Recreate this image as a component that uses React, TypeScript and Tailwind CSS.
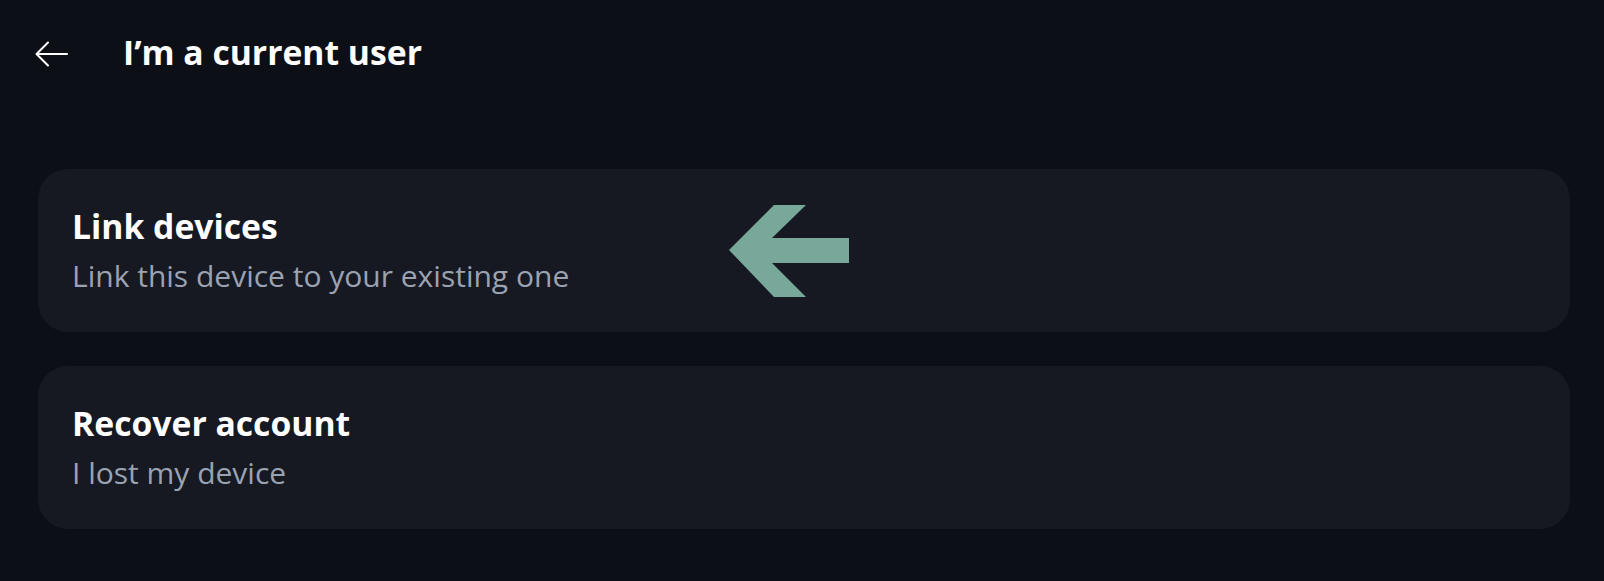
export default function App() {
  return (
    <div
      className="min-h-[581px] w-full bg-[#0c0f16] text-white"
      style={{ fontFamily: '"Open Sans", "Noto Sans", sans-serif' }}
    >
      {/* Header */}
      <div className="flex items-center pt-[32px] pl-[35px]">
        <svg width="34" height="26" viewBox="0 0 34 26" fill="none" className="shrink-0 mt-[3px]">
          <path d="M32 13H2M13 1.5L1.5 13L13 24.5" stroke="#fff" strokeWidth="2" strokeLinecap="round" strokeLinejoin="round" />
        </svg>
        <h1 className="ml-[54px] text-[33.7px] leading-[40px] font-bold">I’m a current user</h1>
      </div>

      {/* Options */}
      <div className="mt-[97px] ml-[38px] mr-[34px] flex flex-col gap-[34px]">
        <button className="relative flex h-[163px] flex-col items-start rounded-[30px] bg-[#161922] pl-[34px] pt-[37px] text-left">
          <span className="text-[33.7px] leading-[40px] font-bold">Link devices</span>
          <span className="mt-[12px] text-[30px] leading-[36px] text-[#9ba2b2]">Link this device to your existing one</span>
          <svg width="122" height="94" viewBox="0 0 122 94" className="absolute left-[690px] top-[34px]">
            <path d="M1 47 L46 2 L78 2 L44 35 L121 35 L121 60 L44 60 L78 94 L46 94 Z" fill="#78a89a" />
          </svg>
        </button>
        <button className="flex h-[163px] flex-col items-start rounded-[30px] bg-[#161922] pl-[34px] pt-[37px] text-left">
          <span className="text-[33.7px] leading-[40px] font-bold">Recover account</span>
          <span className="mt-[12px] text-[30px] leading-[36px] text-[#9ba2b2]">I lost my device</span>
        </button>
      </div>
    </div>
  );
}
